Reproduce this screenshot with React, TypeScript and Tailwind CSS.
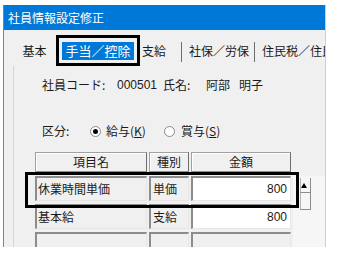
import React from 'react';

const tabs = ['支給', '社保／労保'];

const Radio = ({ checked }: { checked?: boolean }) => (
    <span className="w-[11px] h-[11px] rounded-full border border-[#8a8a8a] bg-white flex items-center justify-center shrink-0">
        {checked && <span className="w-[5px] h-[5px] rounded-full bg-black" />}
    </span>
);

const cellBase = 'h-[25px] border-t-2 border-l-2 border-t-[#8c8c8c] border-l-[#8c8c8c] border-b border-r border-b-[#e6e6e6] border-r-[#e6e6e6] flex items-center leading-none overflow-hidden whitespace-nowrap';

const rows = [
    { name: '休業時間単価', kind: '単価', amount: '800' },
    { name: '基本給', kind: '支給', amount: '800' },
    { name: '', kind: '', amount: '' },
];

export default function App() {
    return (
        <div className="w-[358px] h-[258px] bg-white overflow-hidden font-['Noto_Sans_CJK_JP',sans-serif] text-[12px] text-[#1a1a1a]">
            <div className="ml-[3px] mt-[5px] w-[323px] h-[242px] bg-[#f0f0f0] border-l border-l-[#4a8fd8] border-r border-r-[#cfcfcf] overflow-hidden relative flex flex-col">
                {/* title bar */}
                <div className="h-[25px] shrink-0 bg-[#0078d7] text-white flex items-center pl-[4px] leading-none">
                    社員情報設定修正
                </div>

                {/* tabs */}
                <div className="h-[31px] mt-[5px] shrink-0 flex items-center whitespace-nowrap leading-none overflow-hidden">
                    <div className="ml-[9px] w-[43px] shrink-0 text-center">基本</div>
                    <div className="w-[84px] h-[31px] shrink-0 border-[3px] border-black flex items-center justify-center">
                        <span className="w-[72px] h-[18px] bg-[#0078d7] text-white text-[13px] flex items-center justify-center">
                            手当／控除
                        </span>
                    </div>
                    <div className="w-[41px] shrink-0 pl-[2px]">{tabs[0]}</div>
                    <span className="w-px h-[20px] mt-[3px] shrink-0 bg-[#6d6d6d]" />
                    <div className="w-[72px] shrink-0 pl-[7px]">{tabs[1]}</div>
                    <span className="w-px h-[20px] mt-[3px] shrink-0 bg-[#6d6d6d]" />
                    <div className="pl-[7px] shrink-0">住民税／住民税</div>
                </div>

                {/* tab panel */}
                <div className="flex-1 ml-[9px] border-l border-l-[#d6d6d6] flex flex-col">
                    <div className="mt-[11px] h-[16px] pl-[28px] flex items-center leading-none whitespace-nowrap">
                        <span className="w-[75px] shrink-0">社員コード:</span>
                        <span className="w-[46px] shrink-0 font-['Liberation_Sans',sans-serif]">000501</span>
                        <span className="w-[43px] shrink-0">氏名:</span>
                        <span className="w-[33px] shrink-0">阿部</span>
                        <span>明子</span>
                    </div>

                    <div className="mt-[30px] h-[16px] pl-[28px] flex items-center leading-none whitespace-nowrap">
                        <span className="w-[48px]">区分:</span>
                        <Radio checked />
                        <span className="w-[58px] ml-[5px]">
                            給与(<span className="underline">K</span>)
                        </span>
                        <Radio />
                        <span className="ml-[6px]">
                            賞与(<span className="underline">S</span>)
                        </span>
                    </div>

                    <div className="mt-[13px] ml-[21px] flex flex-1">
                        <div className="grid grid-cols-[112px_40px_100px] gap-x-[2px] content-start">
                            {['項目名', '種別', '金額'].map((h) => (
                                <div
                                    key={h}
                                    className="h-[20px] border border-[#a0a0a0] border-r-[#6d6d6d] border-b-[#8c8c8c] shadow-[inset_1px_1px_0_#ffffff] flex items-center justify-center leading-none"
                                >
                                    {h}
                                </div>
                            ))}
                            <div className="col-span-3 h-[4px]" />
                            {rows.map((r, i) => (
                                <React.Fragment key={i}>
                                    <div className={`${cellBase} bg-[#f0f0f0] pl-[1px] ${i > 0 ? 'mt-[3px]' : ''}`}>{r.name}</div>
                                    <div className={`${cellBase} bg-[#f0f0f0] pl-[2px] ${i > 0 ? 'mt-[3px]' : ''}`}>{r.kind}</div>
                                    <div
                                        className={`${cellBase} ${r.amount ? 'bg-white' : 'bg-[#f0f0f0]'} justify-end pr-[3px] font-['Liberation_Sans',sans-serif] ${i > 0 ? 'mt-[3px]' : ''}`}
                                    >
                                        {r.amount}
                                    </div>
                                </React.Fragment>
                            ))}
                        </div>

                        {/* spin / scroll area */}
                        <div className="flex-1 mt-[24px] ml-[2px] bg-[#f6f6f6] pl-[7px] pt-[2px]">
                            <div className="w-[11px] relative">
                                <div className="h-[15px] border-r border-b border-[#8c8c8c] border-l border-l-[#b5b5b5]" />
                                <div className="h-[17px] border-r border-b border-[#8c8c8c] border-l border-l-[#b5b5b5]" />
                                <svg className="absolute left-[1px] top-[5px]" width="6" height="5" viewBox="0 0 6 5">
                                    <path d="M3 0 L6 5 L0 5 Z" fill="#000" />
                                </svg>
                            </div>
                        </div>
                    </div>
                </div>

                {/* highlight box over first row */}
                <div className="absolute left-[21px] top-[167px] w-[274px] h-[36px] border-[3px] border-black pointer-events-none" />
            </div>
        </div>
    );
}
